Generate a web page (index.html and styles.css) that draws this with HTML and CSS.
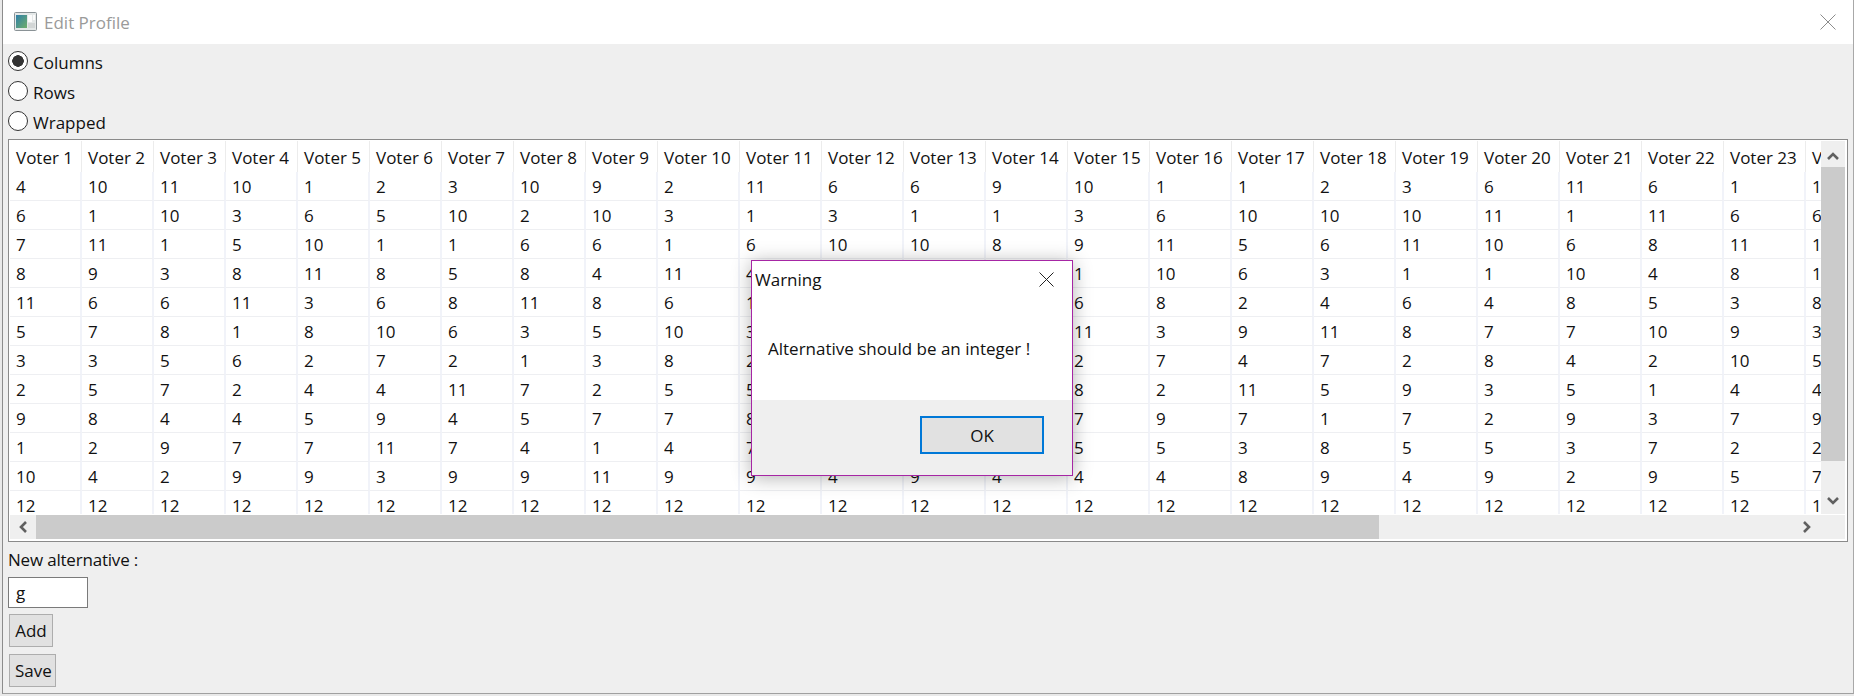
FILE: index.html
```html
<!DOCTYPE html>
<html lang="en">
<head>
  <meta charset="UTF-8">
  <title>Edit Profile</title>
  <link rel="stylesheet" href="styles.css">
</head>
<body>

  <div class="window">
    <div class="titlebar">
      <svg class="app-icon" width="23" height="19" viewBox="0 0 23 19">
        <defs>
          <linearGradient id="pane" x1="0" y1="0" x2="1" y2="1">
            <stop offset="0" stop-color="#2f7fa8"/>
            <stop offset="1" stop-color="#6fae6a"/>
          </linearGradient>
        </defs>
        <rect x="0.5" y="0.5" width="22" height="18" rx="1" fill="#e4e8e8" stroke="#8a9296"/>
        <rect x="2" y="3" width="11" height="13" fill="url(#pane)"/>
        <rect x="14" y="3" width="4" height="7" fill="#fbfbfb"/>
        <rect x="19" y="3" width="2" height="5" fill="#fbfbfb"/>
        <rect x="14" y="11" width="7" height="5" fill="#d2d6d6"/>
      </svg>
      <span class="title">Edit Profile</span>
      <svg class="title-close" width="16" height="16" viewBox="0 0 16 16">
        <path d="M0.5 0.5 L15.5 15.5 M15.5 0.5 L0.5 15.5" stroke="#8c8c8c" fill="none"/>
      </svg>
    </div>

    <div class="content">
      <div class="options">
        <label class="option"><input type="radio" name="layout" checked>Columns</label>
        <label class="option"><input type="radio" name="layout">Rows</label>
        <label class="option"><input type="radio" name="layout">Wrapped</label>
      </div>

      <div class="frame">
        <div class="cells">
          <table>
            <colgroup>
              <col class="narrow" span="9">
              <col class="wide" span="15">
            </colgroup>
            <thead>
              <tr><th>Voter 1</th><th>Voter 2</th><th>Voter 3</th><th>Voter 4</th><th>Voter 5</th><th>Voter 6</th><th>Voter 7</th><th>Voter 8</th><th>Voter 9</th><th>Voter 10</th><th>Voter 11</th><th>Voter 12</th><th>Voter 13</th><th>Voter 14</th><th>Voter 15</th><th>Voter 16</th><th>Voter 17</th><th>Voter 18</th><th>Voter 19</th><th>Voter 20</th><th>Voter 21</th><th>Voter 22</th><th>Voter 23</th><th>Voter 24</th></tr>
            </thead>
            <tbody>
              <tr><td>4</td><td>10</td><td>11</td><td>10</td><td>1</td><td>2</td><td>3</td><td>10</td><td>9</td><td>2</td><td>11</td><td>6</td><td>6</td><td>9</td><td>10</td><td>1</td><td>1</td><td>2</td><td>3</td><td>6</td><td>11</td><td>6</td><td>1</td><td>11</td></tr>
              <tr><td>6</td><td>1</td><td>10</td><td>3</td><td>6</td><td>5</td><td>10</td><td>2</td><td>10</td><td>3</td><td>1</td><td>3</td><td>1</td><td>1</td><td>3</td><td>6</td><td>10</td><td>10</td><td>10</td><td>11</td><td>1</td><td>11</td><td>6</td><td>6</td></tr>
              <tr><td>7</td><td>11</td><td>1</td><td>5</td><td>10</td><td>1</td><td>1</td><td>6</td><td>6</td><td>1</td><td>6</td><td>10</td><td>10</td><td>8</td><td>9</td><td>11</td><td>5</td><td>6</td><td>11</td><td>10</td><td>6</td><td>8</td><td>11</td><td>10</td></tr>
              <tr><td>8</td><td>9</td><td>3</td><td>8</td><td>11</td><td>8</td><td>5</td><td>8</td><td>4</td><td>11</td><td>4</td><td>2</td><td>2</td><td>2</td><td>1</td><td>10</td><td>6</td><td>3</td><td>1</td><td>1</td><td>10</td><td>4</td><td>8</td><td>1</td></tr>
              <tr><td>11</td><td>6</td><td>6</td><td>11</td><td>3</td><td>6</td><td>8</td><td>11</td><td>8</td><td>6</td><td>10</td><td>5</td><td>3</td><td>3</td><td>6</td><td>8</td><td>2</td><td>4</td><td>6</td><td>4</td><td>8</td><td>5</td><td>3</td><td>8</td></tr>
              <tr><td>5</td><td>7</td><td>8</td><td>1</td><td>8</td><td>10</td><td>6</td><td>3</td><td>5</td><td>10</td><td>3</td><td>1</td><td>4</td><td>5</td><td>11</td><td>3</td><td>9</td><td>11</td><td>8</td><td>7</td><td>7</td><td>10</td><td>9</td><td>3</td></tr>
              <tr><td>3</td><td>3</td><td>5</td><td>6</td><td>2</td><td>7</td><td>2</td><td>1</td><td>3</td><td>8</td><td>2</td><td>7</td><td>5</td><td>6</td><td>2</td><td>7</td><td>4</td><td>7</td><td>2</td><td>8</td><td>4</td><td>2</td><td>10</td><td>5</td></tr>
              <tr><td>2</td><td>5</td><td>7</td><td>2</td><td>4</td><td>4</td><td>11</td><td>7</td><td>2</td><td>5</td><td>5</td><td>8</td><td>7</td><td>7</td><td>8</td><td>2</td><td>11</td><td>5</td><td>9</td><td>3</td><td>5</td><td>1</td><td>4</td><td>4</td></tr>
              <tr><td>9</td><td>8</td><td>4</td><td>4</td><td>5</td><td>9</td><td>4</td><td>5</td><td>7</td><td>7</td><td>8</td><td>9</td><td>8</td><td>10</td><td>7</td><td>9</td><td>7</td><td>1</td><td>7</td><td>2</td><td>9</td><td>3</td><td>7</td><td>9</td></tr>
              <tr><td>1</td><td>2</td><td>9</td><td>7</td><td>7</td><td>11</td><td>7</td><td>4</td><td>1</td><td>4</td><td>7</td><td>11</td><td>11</td><td>11</td><td>5</td><td>5</td><td>3</td><td>8</td><td>5</td><td>5</td><td>3</td><td>7</td><td>2</td><td>2</td></tr>
              <tr><td>10</td><td>4</td><td>2</td><td>9</td><td>9</td><td>3</td><td>9</td><td>9</td><td>11</td><td>9</td><td>9</td><td>4</td><td>9</td><td>4</td><td>4</td><td>4</td><td>8</td><td>9</td><td>4</td><td>9</td><td>2</td><td>9</td><td>5</td><td>7</td></tr>
              <tr><td>12</td><td>12</td><td>12</td><td>12</td><td>12</td><td>12</td><td>12</td><td>12</td><td>12</td><td>12</td><td>12</td><td>12</td><td>12</td><td>12</td><td>12</td><td>12</td><td>12</td><td>12</td><td>12</td><td>12</td><td>12</td><td>12</td><td>12</td><td>12</td></tr>
            </tbody>
          </table>
        </div>

        <div class="vbar">
          <svg class="arrow up" width="12" height="8" viewBox="0 0 12 8"><path d="M1 7 L6 2 L11 7" stroke="#606060" stroke-width="2.6" fill="none"/></svg>
          <div class="vthumb"></div>
          <svg class="arrow down" width="12" height="8" viewBox="0 0 12 8"><path d="M1 1 L6 6 L11 1" stroke="#606060" stroke-width="2.6" fill="none"/></svg>
        </div>

        <div class="hbar">
          <svg class="arrow" width="8" height="12" viewBox="0 0 8 12"><path d="M7 1 L2 6 L7 11" stroke="#606060" stroke-width="2.6" fill="none"/></svg>
          <div class="hthumb"></div>
          <svg class="arrow" width="8" height="12" viewBox="0 0 8 12"><path d="M1 1 L6 6 L1 11" stroke="#606060" stroke-width="2.6" fill="none"/></svg>
        </div>
        <div class="corner"></div>
      </div>

      <div class="new-alt">New alternative :</div>
      <input class="alt-input" type="text" value="g">
      <button class="btn add">Add</button>
      <button class="btn save">Save</button>
    </div>
  </div>

  <div class="dialog">
    <div class="dialog-body">
      <div class="dialog-head">
        <span>Warning</span>
        <svg width="15" height="15" viewBox="0 0 15 15"><path d="M0.5 0.5 L14.5 14.5 M14.5 0.5 L0.5 14.5" stroke="#222" fill="none"/></svg>
      </div>
      <p class="dialog-msg">Alternative should be an integer !</p>
    </div>
    <div class="dialog-foot">
      <button class="ok">OK</button>
    </div>
  </div>

</body>
</html>
```

FILE: styles.css
```css
* {
  box-sizing: border-box;
}
html, body {
  margin: 0;
  height: 696px;
  overflow: hidden;
}
body {
  font-family: "Open Sans", "Noto Sans", sans-serif;
  font-size: 17px;
  color: #111;
  background: #e9e9e9;
}

.window {
  margin-left: 2px;
  height: 694px;
  background: #efefef;
  border-left: 1px solid #8c8c8c;
  border-right: 1px solid #a8a8a8;
  border-bottom: 1px solid #a0a0a0;
}

.titlebar {
  height: 44px;
  background: #fff;
  display: flex;
  align-items: center;
  padding: 0 17px 0 11px;
}
.app-icon {
  margin-top: -2px;
}
.title {
  margin-left: 7px;
  color: #9a9a9a;
  flex: 1;
}

.content {
  padding: 2px 5px 0;
}

.option {
  display: flex;
  align-items: center;
  height: 30px;
  padding-top: 2px;
}
.option input {
  appearance: none;
  width: 20px;
  height: 20px;
  margin: -2px 5px 0 0;
  border: 1.5px solid #333;
  border-radius: 50%;
  background: #fff;
}
.option input:checked {
  background: radial-gradient(circle, #333 0 5.5px, #fff 6px);
}

.frame {
  margin-top: 3px;
  height: 403px;
  background: #fff;
  border: 1px solid #8a8a8a;
  padding: 1px 2px 1px 1px;
  display: grid;
  grid-template-columns: 1fr 24px;
  grid-template-rows: 373px 25px;
}
.cells {
  overflow: hidden;
}
table {
  width: 1878px;
  table-layout: fixed;
  border-collapse: separate;
  border-spacing: 0;
}
.narrow {
  width: 72px;
}
.wide {
  width: 82px;
}
th {
  height: 31px;
  padding: 1px 0 0 6px;
  font-weight: normal;
  text-align: left;
  white-space: nowrap;
  overflow: hidden;
  border-right: 1px solid #ececec;
}
td {
  height: 29px;
  padding: 0 0 0 6px;
  border-right: 2px solid #f1f3f9;
  border-bottom: 1px solid #eeeff2;
}

.vbar, .hbar {
  background: #efefef;
  display: flex;
  align-items: center;
}
.vbar {
  flex-direction: column;
}
.up {
  margin: 11px 0 7px;
}
.down {
  margin-top: 36px;
}
.vthumb {
  width: 24px;
  height: 294px;
  background: #cbcbcb;
  flex: none;
}
.hbar {
  margin-top: 1px;
  padding-left: 9px;
}
.hthumb {
  width: 1343px;
  height: 24px;
  margin-left: 9px;
  margin-right: 424px;
  background: #cbcbcb;
}
.corner {
  background: #efefef;
  margin-top: 1px;
}

.new-alt {
  margin-top: 7px;
  line-height: 22px;
  letter-spacing: -0.2px;
}
.alt-input {
  display: block;
  width: 80px;
  height: 31px;
  margin-top: 6px;
  padding: 0 7px;
  border: 1px solid #7a7a7a;
  background: #fff;
  font: inherit;
  color: inherit;
}
.btn {
  display: block;
  height: 33px;
  margin-left: 1px;
  padding: 0 5px;
  border: 1px solid #adadad;
  background: #e1e1e1;
  font: inherit;
  color: inherit;
}
.add {
  margin-top: 6px;
  width: 44px;
}
.save {
  margin-top: 7px;
  width: 47px;
}

.dialog {
  position: absolute;
  left: 751px;
  top: 260px;
  width: 322px;
  height: 216px;
  border: 1px solid #a626a4;
  background: #fff;
  box-shadow: 0 2px 18px rgba(0, 0, 0, 0.3);
  display: flex;
  flex-direction: column;
}
.dialog-body {
  height: 139px;
}
.dialog-head {
  display: flex;
  justify-content: space-between;
  align-items: center;
  height: 36px;
  padding: 0 18px 0 3px;
}
.dialog-msg {
  margin: 40px 0 0 16px;
}
.dialog-foot {
  flex: 1;
  background: #efefef;
  padding: 16px 28px 0 0;
  display: flex;
  justify-content: flex-end;
  align-items: flex-start;
}
.ok {
  width: 124px;
  height: 38px;
  border: 2px solid #0078d7;
  background: #e1e1e1;
  font: inherit;
  color: inherit;
}
```
